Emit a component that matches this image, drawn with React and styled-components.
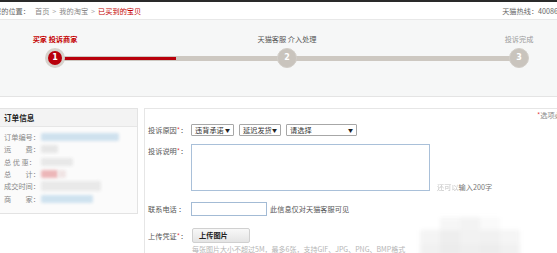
import React from 'react';
import styled, { createGlobalStyle } from 'styled-components';

const GlobalStyle = createGlobalStyle`
  html, body {
    margin: 0;
    padding: 0;
    overflow: hidden;
    background: #fff;
  }
  body {
    font-family: "Noto Sans CJK SC", "Noto Sans", sans-serif;
    font-size: 7.2px;
    line-height: 10px;
    color: #666;
  }
`;

const Page = styled.div`
  width: 590px;
  margin-left: -7px;
  position: relative;
`;

/* top breadcrumb bar */
const TopBar = styled.div`
  display: flex;
  justify-content: space-between;
  align-items: center;
  height: 17px;
  border-top: 2px solid #2a2a2a;
  border-bottom: 1px solid #e8e8e8;
  padding: 0 5px 0 1px;
`;

const Crumbs = styled.div`
  display: flex;
  align-items: center;
`;

const Crumb = styled.span`
  color: ${(p) => (p.$current ? '#c40000' : p.$muted ? '#888' : '#666')};
`;

const Sep = styled.span`
  color: #aaa;
  margin: 0 3px;
`;

const Hotline = styled.span`
  color: #666;
  white-space: nowrap;
`;

/* progress steps */
const StepArea = styled.div`
  height: 62px;
  padding-top: 14px;
  background: #f6f7f7;
  border-bottom: 1px solid #e4e4e4;
`;

const StepTrack = styled.div`
  position: relative;
  margin-left: 52px;
  width: 484px;
  display: flex;
  justify-content: space-between;
`;

const TrackLine = styled.div`
  position: absolute;
  left: 10px;
  right: 10px;
  top: 22px;
  height: 5px;
  background: #cdc8c1;
`;

const TrackDone = styled.div`
  position: absolute;
  left: 10px;
  width: 121px;
  top: 23px;
  height: 3px;
  background: #b8000b;
`;

const Step = styled.div`
  position: relative;
  z-index: 1;
  width: 20px;
  display: flex;
  flex-direction: column;
  align-items: center;
`;

const StepLabel = styled.div`
  white-space: nowrap;
  height: 10px;
  margin-bottom: 4px;
  color: ${(p) => (p.$state === 'active' ? '#c40000' : p.$state === 'next' ? '#555' : '#999')};
  font-weight: ${(p) => (p.$state === 'active' ? 'bold' : 'normal')};
`;

const StepDot = styled.div`
  box-sizing: border-box;
  width: 20px;
  height: 20px;
  border-radius: 50%;
  display: flex;
  align-items: center;
  justify-content: center;
  font-family: "DejaVu Sans", sans-serif;
  font-weight: bold;
  font-size: 8px;
  color: #fff;
  background: ${(p) => (p.$active ? '#b8000b' : '#c9c4bd')};
  border: ${(p) => (p.$active ? '3px solid #d6d2cc' : '1px solid #d2cec8')};
`;

/* lower area */
const Main = styled.div`
  display: flex;
  gap: 6px;
  padding-top: 11px;
`;

const OrderBox = styled.div`
  width: 143px;
  flex-shrink: 0;
  align-self: flex-start;
  border: 1px solid #e3e3e3;
  background: #fbfbfb;
`;

const OrderHead = styled.div`
  height: 17px;
  line-height: 17px;
  padding-left: 10px;
  background: #f3f3f3;
  border-bottom: 1px solid #e6e6e6;
  color: #222;
  font-weight: bold;
  font-size: 7.6px;
`;

const OrderBody = styled.div`
  padding: 4px 0 8px 10px;
`;

const OrderRow = styled.div`
  display: flex;
  align-items: center;
  height: 12.3px;
`;

const OrderKey = styled.span`
  width: 37px;
  color: #888;
  white-space: pre;
`;

const Blur = styled.span`
  display: inline-block;
  height: ${(p) => p.$h || 8}px;
  width: ${(p) => p.$w}px;
  background: ${(p) => p.$c};
  filter: blur(1.6px);
  border-radius: 2px;
`;

const FormPanel = styled.div`
  flex: 1;
  position: relative;
  min-height: 150px;
  border-top: 1px solid #e6e6e6;
  border-left: 1px solid #e6e6e6;
  padding: 1px 14px 0 3px;
`;

const RequiredNote = styled.div`
  text-align: right;
  color: #888;
  height: 10px;
  margin-bottom: 4px;
`;

const Star = styled.span`
  color: #e4393c;
`;

const FormRow = styled.div`
  display: flex;
  align-items: ${(p) => (p.$top ? 'flex-start' : 'center')};
  margin-bottom: ${(p) => p.$mb || 0}px;
`;

const FieldLabel = styled.div`
  width: 43px;
  flex-shrink: 0;
  color: #555;
  white-space: pre;
  padding-top: ${(p) => (p.$top ? 2 : 0)}px;
`;

const SelectBox = styled.div`
  box-sizing: border-box;
  width: ${(p) => p.$w}px;
  height: 12px;
  margin-right: 5px;
  border: 1px solid #a7a7a7;
  border-radius: 1px;
  background: #fff;
  color: #333;
  display: flex;
  align-items: center;
  justify-content: space-between;
  padding: 0 3px 0 3px;
  line-height: 10px;
`;

const Caret = styled.span`
  font-size: 5px;
  color: #222;
`;

const TextArea = styled.div`
  box-sizing: border-box;
  width: 239px;
  height: 47px;
  border: 1px solid #a9c0d9;
  background: #fff;
`;

const Counter = styled.div`
  align-self: flex-end;
  margin-left: 7px;
  margin-bottom: -1px;
  color: #777;
`;

const Faded = styled.span`
  color: #c4c4c4;
  filter: blur(0.6px);
`;

const TextInput = styled.div`
  box-sizing: border-box;
  width: 76px;
  height: 14px;
  border: 1px solid #a3bbd5;
  background: #fff;
`;

const Note = styled.span`
  margin-left: 3px;
  color: #555;
`;

const UploadButton = styled.div`
  box-sizing: border-box;
  width: 58px;
  height: 15px;
  margin-left: 1px;
  padding-left: 6px;
  border: 1px solid #d0d0d0;
  border-radius: 2px;
  background: linear-gradient(#f8f8f8, #e4e4e4);
  color: #222;
  font-weight: bold;
  line-height: 13px;
`;

const Hint = styled.div`
  margin-left: 44px;
  margin-top: 1px;
  color: #b5b5b5;
  font-size: 7px;
  white-space: nowrap;
`;

const Smudge = styled.div`
  position: absolute;
  left: 275px;
  top: 108px;
  width: 100px;
  height: 40px;
  display: grid;
  grid-template-columns: repeat(5, 1fr);
  filter: blur(2px);
  opacity: 0.9;
`;

const SmudgeCell = styled.div`
  background: ${(p) => p.$c};
`;

const orderRows = [
  { key: '订单编号：', blurs: [{ w: 78, c: '#cfe1ee' }] },
  { key: '运　　费：', blurs: [{ w: 17, c: '#e6e6e6' }] },
  { key: '总 优 惠：', blurs: [{ w: 32, c: '#e8e8e8' }] },
  { key: '总　　计：', blurs: [{ w: 17, c: '#ecb6b8' }, { w: 8, c: '#f0e4e4' }] },
  { key: '成交时间：', blurs: [{ w: 60, c: '#e9e9e9', h: 10 }] },
  { key: '商　　家：', blurs: [{ w: 52, c: '#cfe2ef' }] },
];

const smudge = [
  '#fff', '#f6f6f6', '#f2f2f2', '#fafafa', '#fff',
  '#f3f3f3', '#ededed', '#f1f1f1', '#f0f0f0', '#f4f4f4',
  '#f0f0f0', '#ebebeb', '#eeeeee', '#ececec', '#f0f0f0',
];

export default function App() {
  return (
    <Page>
      <GlobalStyle />
      <TopBar>
        <Crumbs>
          <Crumb>您的位置：</Crumb>
          <Crumb $muted style={{ marginLeft: 5 }}>首页</Crumb>
          <Sep>&gt;</Sep>
          <Crumb $muted>我的淘宝</Crumb>
          <Sep>&gt;</Sep>
          <Crumb $current>已买到的宝贝</Crumb>
        </Crumbs>
        <Hotline>天猫热线：4008608800</Hotline>
      </TopBar>

      <StepArea>
        <StepTrack>
          <TrackLine />
          <TrackDone />
          <Step>
            <StepLabel $state="active">买家 投诉商家</StepLabel>
            <StepDot $active>1</StepDot>
          </Step>
          <Step>
            <StepLabel $state="next">天猫客服 介入处理</StepLabel>
            <StepDot>2</StepDot>
          </Step>
          <Step>
            <StepLabel $state="todo">投诉完成</StepLabel>
            <StepDot>3</StepDot>
          </Step>
        </StepTrack>
      </StepArea>

      <Main>
        <OrderBox>
          <OrderHead>订单信息</OrderHead>
          <OrderBody>
            {orderRows.map((r) => (
              <OrderRow key={r.key}>
                <OrderKey>{r.key}</OrderKey>
                {r.blurs.map((b, i) => (
                  <Blur key={i} $w={b.w} $c={b.c} $h={b.h} />
                ))}
              </OrderRow>
            ))}
          </OrderBody>
        </OrderBox>

        <FormPanel>
          <RequiredNote>
            <Star>*</Star>选项必填
          </RequiredNote>

          <FormRow $mb={8}>
            <FieldLabel>
              投诉原因<Star>*</Star>：
            </FieldLabel>
            <SelectBox $w={43}>
              违背承诺<Caret>▼</Caret>
            </SelectBox>
            <SelectBox $w={42}>
              延迟发货<Caret>▼</Caret>
            </SelectBox>
            <SelectBox $w={71}>
              请选择<Caret>▼</Caret>
            </SelectBox>
          </FormRow>

          <FormRow $top $mb={11}>
            <FieldLabel $top>
              投诉说明<Star>*</Star>：
            </FieldLabel>
            <TextArea />
            <Counter>
              <Faded>还可以</Faded>输入200字
            </Counter>
          </FormRow>

          <FormRow $mb={12}>
            <FieldLabel>联系电话 ：</FieldLabel>
            <TextInput />
            <Note>此信息仅对天猫客服可见</Note>
          </FormRow>

          <FormRow>
            <FieldLabel>
              上传凭证<Star>*</Star>：
            </FieldLabel>
            <UploadButton>上传图片</UploadButton>
          </FormRow>
          <Hint>每张图片大小不超过5M，最多6张，支持GIF、JPG、PNG、BMP格式</Hint>

          <Smudge>
            {smudge.map((c, i) => (
              <SmudgeCell key={i} $c={c} />
            ))}
          </Smudge>
        </FormPanel>
      </Main>
    </Page>
  );
}
